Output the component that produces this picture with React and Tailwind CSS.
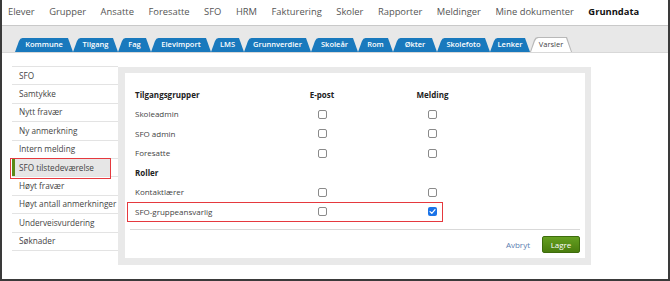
import React from 'react';

const navItems = ['Elever', 'Grupper', 'Ansatte', 'Foresatte', 'SFO', 'HRM', 'Fakturering', 'Skoler', 'Rapporter', 'Meldinger', 'Mine dokumenter'];

const tabs = [
  { label: 'Kommune', w: 'w-[58px]' },
  { label: 'Tilgang', w: 'w-[45px]' },
  { label: 'Fag', w: 'w-[33px]' },
  { label: 'Elevimport', w: 'w-[60px]' },
  { label: 'LMS', w: 'w-[33px]' },
  { label: 'Grunnverdier', w: 'w-[67px]' },
  { label: 'Skoleår', w: 'w-[47px]' },
  { label: 'Rom', w: 'w-[35px]' },
  { label: 'Økter', w: 'w-[44px]' },
  { label: 'Skolefoto', w: 'w-[53px]' },
  { label: 'Lenker', w: 'w-[40px]' },
];

const menu = ['SFO', 'Samtykke', 'Nytt fravær', 'Ny anmerkning', 'Intern melding', 'SFO tilstedeværelse', 'Høyt fravær', 'Høyt antall anmerkninger', 'Underveisvurdering', 'Søknader'];

const Checkbox = ({ checked }) =>
  checked ? (
    <span className="flex h-[9px] w-[9px] items-center justify-center rounded-[2px] bg-[#1a73e8]">
      <svg viewBox="0 0 10 10" className="h-[7px] w-[7px]">
        <path d="M1.5 5.2 L4 7.6 L8.6 2.4" fill="none" stroke="#fff" strokeWidth="1.8" strokeLinecap="round" strokeLinejoin="round" />
      </svg>
    </span>
  ) : (
    <span className="block h-[9px] w-[9px] rounded-[2px] border border-[#8a8a8a] bg-white" />
  );

const Row = ({ label, bold, email, msg, boxes = true, highlight }) => (
  <div className="relative flex h-[19.5px] items-center">
    {highlight && <div className="absolute -left-[8px] top-0 h-[19.5px] w-[316px] border-[1.5px] border-[#e5393e]" />}
    <div className={`w-[167px] ${bold ? 'font-bold text-[#222]' : 'text-[#444]'}`}>{label}</div>
    <div className="flex w-[40px] justify-center">{boxes && <Checkbox checked={email} />}</div>
    <div className="ml-[70.5px] flex w-[40px] justify-center">{boxes && <Checkbox checked={msg} />}</div>
  </div>
);

export default function App() {
  return (
    <div className="h-[281px] w-[670px] overflow-hidden border-x-2 border-b-2 border-[#3a3a3a] bg-white font-['Open_Sans',sans-serif]">
      {/* top menu */}
      <div className="flex h-[26px] items-center gap-[14.5px] whitespace-nowrap border-b border-[#c9c9c9] pl-[6px] text-[9.4px] text-[#555]">
        {navItems.map((n) => (
          <span key={n}>{n}</span>
        ))}
        <span className="font-bold text-[#111]">Grunndata</span>
      </div>

      {/* tabs */}
      <div className="flex h-[27px] items-end border-b border-[#d8d8d8] bg-[#e8e8e8] pl-[13px]">
        {tabs.map((t) => (
          <div
            key={t.label}
            className={`${t.w} flex h-[14px] items-center justify-center bg-[#1979bd] text-[7.5px] font-semibold text-white [clip-path:polygon(0_100%,4px_3px,5.5px_0.8px,7.5px_0,calc(100%_-_5px)_0,100%_100%)]`}
          >
            {t.label}
          </div>
        ))}
        <div className="relative h-[15px] w-[42px] bg-[#b8b8b8] [clip-path:polygon(0_100%,4px_3px,5.5px_0.8px,7.5px_0,calc(100%_-_5px)_0,100%_100%)]">
          <div className="absolute inset-x-[1px] bottom-0 top-[1px] flex items-center justify-center bg-white text-[7.5px] text-[#444] [clip-path:polygon(0_100%,4px_3px,5.5px_0.8px,7.5px_0,calc(100%_-_5px)_0,100%_100%)]">
            Varsler
          </div>
        </div>
      </div>

      {/* body */}
      <div className="flex items-start pl-[10px] pt-[13px]">
        {/* sidebar */}
        <div className="w-[106px] border-t border-[#e3e3e3] text-[8.2px] text-[#444]">
          {menu.map((m) =>
            m === 'SFO tilstedeværelse' ? (
              <div key={m} className="relative flex h-[18.4px] items-center border-b border-[#e3e3e3]">
                <div className="flex h-full w-[98px] items-center border-l-[3px] border-[#5b8a16] bg-[#e6e6e6] pl-[4px]">{m}</div>
                <div className="absolute -left-[2px] -top-[1px] h-[21px] w-[101px] border-[1.5px] border-[#e5393e]" />
              </div>
            ) : (
              <div key={m} className="flex h-[18.4px] items-center whitespace-nowrap border-b border-[#e3e3e3] pl-[7px]">
                {m}
              </div>
            )
          )}
        </div>

        {/* panel */}
        <div className="mt-[1px] h-[198px] w-[473px] bg-[#e9e9e9] pb-[7px] pl-[7px] pr-[6px] pt-[6px]">
          <div className="flex h-full flex-col bg-white text-[8px]">
            <div className="pl-[10px] pt-[12px]">
              <div className="relative flex h-[19.5px] items-center font-bold text-[#222]">
                <div className="w-[167px]">Tilgangsgrupper</div>
                <div className="w-[40px] text-center">E-post</div>
                <div className="ml-[70.5px] w-[40px] text-center">Melding</div>
              </div>
              <Row label="Skoleadmin" />
              <Row label="SFO admin" />
              <Row label="Foresatte" />
              <Row label="Roller" bold boxes={false} />
              <Row label="Kontaktlærer" />
              <Row label="SFO-gruppeansvarlig" msg highlight />
            </div>
            <div className="mx-[5px] mt-[7.5px] border-t border-[#d9d9d9]" />
            <div className="flex items-center justify-end gap-[12px] pr-[5px] pt-[6px]">
              <span className="text-[#5a7db0]">Avbryt</span>
              <span className="flex h-[17px] w-[38px] items-center justify-center rounded-[2px] border border-[#3d6c0c] bg-gradient-to-b from-[#65a020] to-[#4a7d0e] text-white">
                Lagre
              </span>
            </div>
          </div>
        </div>
      </div>
    </div>
  );
}
